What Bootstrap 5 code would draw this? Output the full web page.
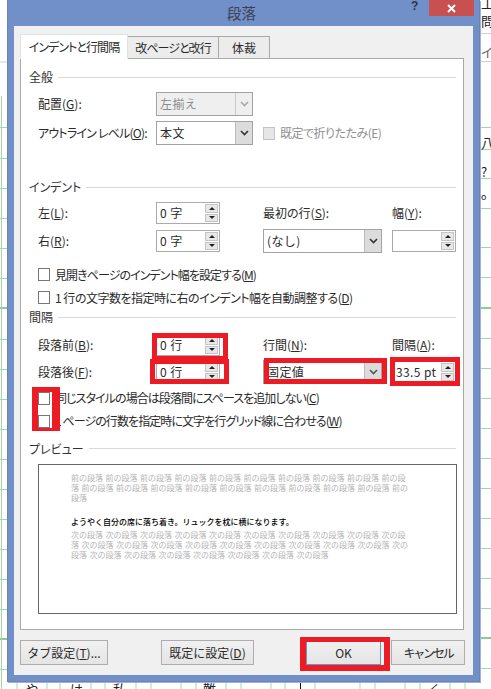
<!DOCTYPE html>
<html lang="ja">
<head>
<meta charset="utf-8">
<title>段落</title>
<link rel="stylesheet" href="https://cdn.jsdelivr.net/npm/bootstrap@5.3.0/dist/css/bootstrap.min.css">
<style>
html,body{height:100%;}
body{margin:0;background:#fff;color:#2a2a2a;font:12px/16px "Noto Sans CJK JP",sans-serif;font-feature-settings:"palt";position:relative;overflow:hidden;width:491px;height:689px;}
.sheet{position:absolute;inset:0;z-index:0;}
.frag{position:absolute;z-index:0;font-size:13px;line-height:14px;color:#222;white-space:nowrap;}
.dlg{position:relative;z-index:1;margin-left:7px;width:473px;height:682px;background:#7190c9;border:1px solid #6a84b4;border-top:0;display:flex;flex-direction:column;box-shadow:1px 1px 0 #9fb3d8;}
.cap{height:26px;flex:none;position:relative;display:flex;justify-content:center;align-items:center;padding-right:4px;font-size:14.5px;color:#3b4250;}
.qmark{position:absolute;left:403px;top:0;font:bold 12px/13px "Liberation Sans",sans-serif;color:#2c3650;}
.xbtn{position:absolute;left:421px;top:0;width:45px;height:16px;background:#c75050;color:#fff;display:flex;align-items:center;justify-content:center;}
.dbody{flex:1;margin:0 6px 6px;background:#f0f0f0;padding:8px 6px 0 6px;display:flex;flex-direction:column;}
.nav-tabs.tbs{height:25px;border-bottom:0;gap:0;flex-wrap:nowrap;align-items:flex-end;position:relative;z-index:1;}
.tbs .nav-link{margin:0;padding:0;height:23px;border:1px solid #a9a9a9;border-bottom:1px solid #a9a9a9;border-radius:0;background:#ececec;color:#2a2a2a;font-size:12px;line-height:21px;text-align:center;letter-spacing:-.95px;}
.tbs .nav-link.active{height:25px;background:#fff;border-bottom-color:#fff;color:#2a2a2a;line-height:24px;}
.t1{width:108px;}.t2{width:91px;border-left:0!important;}.t3{width:51px;border-left:0!important;letter-spacing:0!important;}
.pnl{height:572px;margin-top:-1px;width:444px;background:#fff;border:1px solid #a9a9a9;padding:10px 7px 0 8px;}
.hd{height:16px;display:flex;align-items:center;gap:5px;color:#333;}
.hd::after{content:"";flex:1;border-top:1px solid #d9d9d9;}
.grd{display:grid;grid-template-columns:118px 107px 129px 64px;padding-left:9px;align-items:center;white-space:nowrap;}
.g1{row-gap:5px;grid-auto-rows:24px;margin-top:7px;}
.g2{row-gap:4px;grid-auto-rows:24px;margin-top:6px;}
.g3{row-gap:3px;grid-template-rows:24px 24px;margin-top:8px;}
.m34{margin-top:34px;}
.tight{letter-spacing:-.8px;}
.form-control.fld{height:22px;padding:0 0 0 3px;border:1px solid #ababab;border-radius:0;font-size:12px;line-height:20px;color:#2a2a2a;display:flex;justify-content:space-between;background:#fff;font-feature-settings:normal;letter-spacing:.4px;}
.form-control.fld.sel{height:24px;line-height:22px;padding-left:3px;border-color:#a3a3a3;}
.form-control.fld.off{background:#efefef;color:#8a8a8a;}
.w97{width:97px;}.w64{width:64px;}.w119{width:119px;}
.chev{width:17px;flex:none;background:#dcdcdc;border-left:1px solid #bbb;display:flex;align-items:center;justify-content:center;}
.off .chev{background:#efefef;border-left-color:#c8c8c8;}
.spn{width:15px;flex:none;display:flex;flex-direction:column;gap:1px;padding:1px;}
.spn i{flex:1;background:#e8e8e8;border:1px solid #c4c4c4;display:flex;align-items:center;justify-content:center;}
.upa,.dna{width:0;height:0;border-left:3px solid transparent;border-right:3px solid transparent;}
.upa{border-bottom:3px solid #222;}.dna{border-top:3px solid #222;}
.cks{padding-left:9px;}
.cks1{margin-top:10px;}
.cks2{margin-top:2.5px;}
.ckr{height:23px;display:flex;align-items:center;gap:5px;white-space:nowrap;letter-spacing:-.93px;}
.ckr.wide{letter-spacing:-.5px;}
.form-check-input.cb{width:12px;height:13px;margin:0;border:1px solid #777;border-radius:0;flex:none;background-color:#fff;}
.form-check-input.cb:disabled{opacity:1;background:#e6e6e6;border-color:#c4c4c4;}
.dim{color:#8f8f8f;}
.pvw{margin:7px 0 0 9px;width:419px;height:150px;border:1px solid #666;border-width:1.5px;padding:8px 40px 0 32px;font-size:8px;line-height:10px;font-feature-settings:normal;word-spacing:.7px;}
.pvw div{width:338px;color:#b4b4b4;}
.pvw .cur{color:#000;margin:14px 0 3px;font-weight:500;white-space:nowrap;}
.ftr{margin-top:10px;display:flex;height:25px;}
.btn.bt{height:25px;padding:0;border:1px solid #adadad;border-radius:0;background:linear-gradient(#f0f0f0,#e5e5e5);color:#2a2a2a;font-size:12px;line-height:23px;}
.bt1{width:88px;}.bt2{width:93px;margin-left:53px;}.bt3{width:75px;margin-left:52px;border-color:#5b9bd0!important;}.bt4{width:74px;margin-left:10px;letter-spacing:-2.2px;}
.rb{position:absolute;z-index:2;border:5px solid #ed1c24;pointer-events:none;}
</style>
</head>
<body>
<svg class="sheet" width="491" height="689" fill="none">
  <path stroke="#cfcfcf" d="M480 33.5H491M480 61.5H491M0 62H7"/>
  <path stroke="#a8d5a8" d="M0 127.5H7M480 127.5H491M0 158.5H7M480 149.5H491M0 188.5H7M480 178.5H491M0 218.5H7M480 208.5H491M0 248.5H7M480 247.5H491M0 278.5H7M480 277.5H491M0 339.5H7M480 338.5H491M0 369.5H7M480 368.5H491M0 399.5H7M480 398.5H491M0 429.5H7M480 428.5H491M0 459.5H7M480 458.5H491M0 489.5H7M480 488.5H491M0 519.5H7M480 518.5H491M0 549.5H7M480 548.5H491M0 579.5H7M480 578.5H491M0 609.5H7M480 608.5H491M0 669.5H7M480 668.5H491"/>
  <path stroke="#8fcb8f" stroke-width="2" d="M0 308H7M480 308H491M0 639H7M480 638H491"/>
  <path stroke="#a8d5a8" d="M1.5 96V689M17 683V689M47 683V689M60 683V689M91 683V689M105 683V689M136 683V689M151 683V689M181 683V689M196 683V689M226 683V689M241 683V689M271 683V689M285 683V689M315 683V689M360 683V689M375 683V689M405 683V689M420 683V689M450 683V689M465 683V689"/>
  <path stroke="#111" d="M300.5 683V689"/>
</svg>
<span class="frag" style="left:481px;top:-4px">工</span>
<span class="frag" style="left:481px;top:14px">問話</span>
<span class="frag" style="left:481px;top:45px;color:#666">イ/</span>
<span class="frag" style="left:481px;top:136px">八</span>
<span class="frag" style="left:481px;top:165px">?</span>
<span class="frag" style="left:481px;top:190px;font-size:9px">o</span>
<span class="frag" style="left:26px;top:682px">や</span>
<span class="frag" style="left:70px;top:682px">は</span>
<span class="frag" style="left:113px;top:682px">私</span>
<span class="frag" style="left:203px;top:682px">難</span>
<span class="frag" style="left:430px;top:682px">く</span>

<div class="dlg">
  <div class="cap">段落
    <span class="qmark">?</span>
    <span class="xbtn"><svg width="9" height="9" viewBox="0 0 9 9"><path d="M1 1L8 8M8 1L1 8" stroke="#fff" stroke-width="2"/></svg></span>
  </div>
  <div class="dbody">
    <ul class="nav nav-tabs tbs">
      <li class="nav-item"><a class="nav-link active t1">インデントと行間隔</a></li>
      <li class="nav-item"><a class="nav-link t2">改ページと改行</a></li>
      <li class="nav-item"><a class="nav-link t3">体裁</a></li>
    </ul>
    <div class="pnl">
      <div class="hd">全般</div>
      <div class="grd g1">
        <div>配置(<u>G</u>):</div>
        <div class="form-control fld sel off w97">左揃え<span class="chev"><svg width="9" height="6" viewBox="0 0 9 6"><path d="M1 1L4.5 4.5L8 1" stroke="#a8a8a8" stroke-width="1.6" fill="none"/></svg></span></div>
        <div></div><div></div>
        <div class="tight">アウトライン レベル(<u>O</u>):</div>
        <div class="form-control fld sel w97">本文<span class="chev"><svg width="9" height="6" viewBox="0 0 9 6"><path d="M1 1L4.5 4.5L8 1" stroke="#333" stroke-width="1.6" fill="none"/></svg></span></div>
        <div class="ckr wide dim" style="grid-column:span 2"><input class="form-check-input cb" type="checkbox" disabled aria-label="既定で折りたたみ"><span>既定で折りたたみ(E)</span></div>
      </div>

      <div class="hd m34">インデント</div>
      <div class="grd g2">
        <div>左(<u>L</u>):</div>
        <div class="form-control fld w64">0 字<span class="spn"><i><b class="upa"></b></i><i><b class="dna"></b></i></span></div>
        <div>最初の行(<u>S</u>):</div>
        <div>幅(<u>Y</u>):</div>
        <div>右(<u>R</u>):</div>
        <div class="form-control fld w64">0 字<span class="spn"><i><b class="upa"></b></i><i><b class="dna"></b></i></span></div>
        <div class="form-control fld sel w119">(なし)<span class="chev"><svg width="9" height="6" viewBox="0 0 9 6"><path d="M1 1L4.5 4.5L8 1" stroke="#333" stroke-width="1.6" fill="none"/></svg></span></div>
        <div class="form-control fld w64"><span></span><span class="spn"><i><b class="upa"></b></i><i><b class="dna"></b></i></span></div>
      </div>
      <div class="cks cks1">
        <div class="ckr"><input class="form-check-input cb" type="checkbox" aria-label="見開き"><span>見開きページのインデント幅を設定する(<u>M</u>)</span></div>
        <div class="ckr wide"><input class="form-check-input cb" type="checkbox" aria-label="自動調整"><span>1 行の文字数を指定時に右のインデント幅を自動調整する(<u>D</u>)</span></div>
      </div>

      <div class="hd">間隔</div>
      <div class="grd g3">
        <div>段落前(<u>B</u>):</div>
        <div class="form-control fld w64">0 行<span class="spn"><i><b class="upa"></b></i><i><b class="dna"></b></i></span></div>
        <div>行間(<u>N</u>):</div>
        <div>間隔(<u>A</u>):</div>
        <div>段落後(<u>F</u>):</div>
        <div class="form-control fld w64">0 行<span class="spn"><i><b class="upa"></b></i><i><b class="dna"></b></i></span></div>
        <div class="form-control fld sel w119">固定値<span class="chev"><svg width="9" height="6" viewBox="0 0 9 6"><path d="M1 1L4.5 4.5L8 1" stroke="#555" stroke-width="1.6" fill="none"/></svg></span></div>
        <div class="form-control fld w64">33.5 pt<span class="spn"><i><b class="upa"></b></i><i><b class="dna"></b></i></span></div>
      </div>
      <div class="cks cks2">
        <div class="ckr"><input class="form-check-input cb" type="checkbox" aria-label="同じスタイル"><span>同じスタイルの場合は段落間にスペースを追加しない(<u>C</u>)</span></div>
        <div class="ckr"><input class="form-check-input cb" type="checkbox" aria-label="グリッド"><span>1 ページの行数を指定時に文字を行グリッド線に合わせる(<u>W</u>)</span></div>
      </div>

      <div class="hd mt-2">プレビュー</div>
      <div class="pvw">
        <div>前の段落 前の段落 前の段落 前の段落 前の段落 前の段落 前の段落 前の段落 前の段落 前の段落 前の段落 前の段落 前の段落 前の段落 前の段落 前の段落 前の段落 前の段落 前の段落 前の段落</div>
        <div class="cur">ようやく自分の席に落ち着き。リュックを枕に横になります。</div>
        <div>次の段落 次の段落 次の段落 次の段落 次の段落 次の段落 次の段落 次の段落 次の段落 次の段落 次の段落 次の段落 次の段落 次の段落 次の段落 次の段落 次の段落 次の段落 次の段落 次の段落 次の段落 次の段落 次の段落 次の段落 次の段落 次の段落 次の段落</div>
      </div>
    </div>
    <div class="ftr">
      <button type="button" class="btn bt bt1">タブ設定(<u>T</u>)...</button>
      <button type="button" class="btn bt bt2">既定に設定(<u>D</u>)</button>
      <button type="button" class="btn bt bt3">OK</button>
      <button type="button" class="btn bt bt4">キャンセル</button>
    </div>
  </div>
</div>

<div class="rb" style="left:152px;top:333px;width:76px;height:28px"></div>
<div class="rb" style="left:150px;top:359px;width:79px;height:25px"></div>
<div class="rb" style="left:264px;top:358px;width:123px;height:26px"></div>
<div class="rb" style="left:390px;top:357px;width:70px;height:29px"></div>
<div class="rb" style="left:32px;top:387px;width:28px;height:44px;border-width:5px 8px 3px 6px"></div>
<div class="rb" style="left:300px;top:637px;width:90px;height:34px;border-width:5px 6px 6px 6px"></div>
</body>
</html>
